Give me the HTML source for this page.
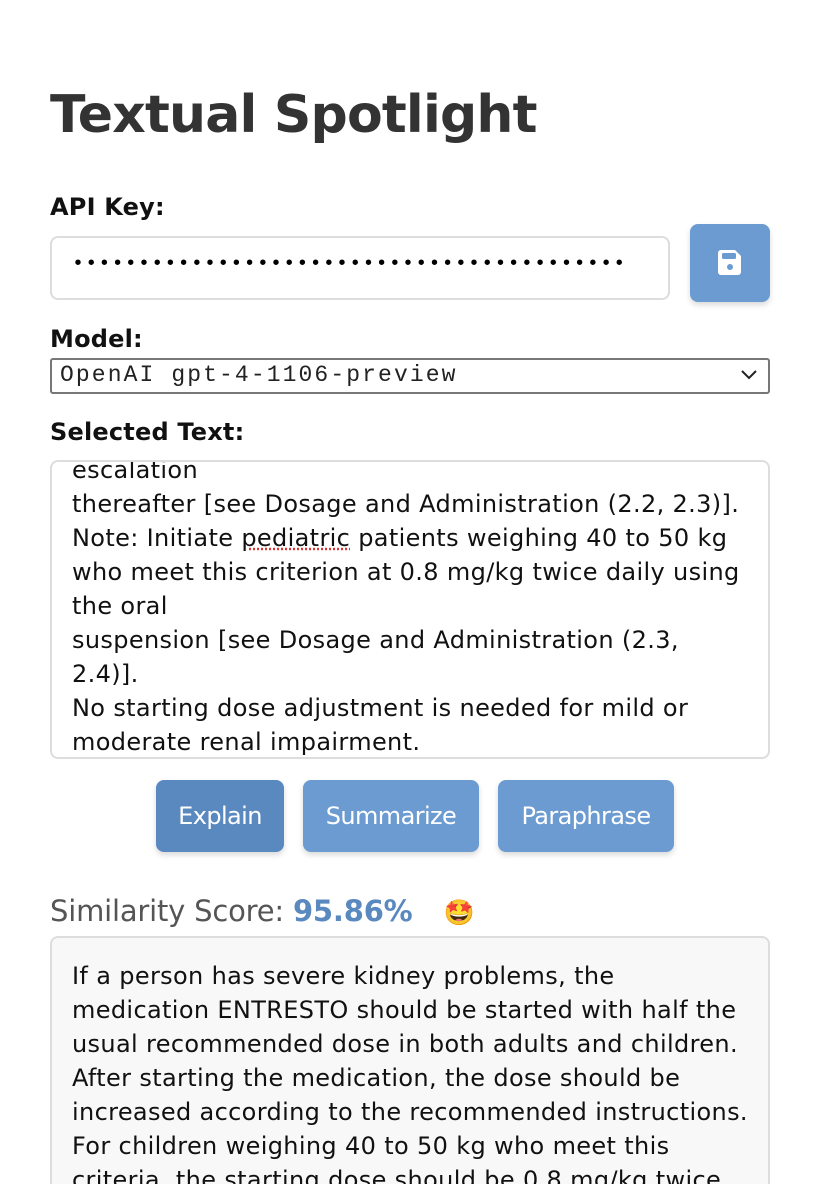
<!DOCTYPE html>
<html><head><style>
html,body{margin:0;overflow:hidden}
body{background:#fff;font-family:"DejaVu Sans",sans-serif;color:#000;width:816px;height:1184px;position:relative}
.a{position:absolute}
h1{position:absolute;left:50px;top:85px;margin:0;font-size:52px;font-weight:bold;color:#333;letter-spacing:-0.8px}
.lbl{position:absolute;left:50px;font-size:24px;font-weight:bold;color:#111;letter-spacing:0.2px}
.txt{font-size:24px;line-height:34px;color:#111;letter-spacing:0.35px}
.btn{position:absolute;top:780px;height:72px;background:#6b9bd1;color:#fff;border-radius:8px;font-size:24px;display:flex;align-items:center;justify-content:center;box-shadow:0 3px 6px rgba(0,0,0,.15);letter-spacing:-0.6px}
</style></head><body>
<h1>Textual Spotlight</h1>
<div class="lbl" style="top:193px">API Key:</div>
<div class="a" style="left:50px;top:236px;width:616px;height:60px;border:2px solid #ddd;border-radius:8px"></div>
<div class="a" style="left:72px;top:253px;font-size:20px;letter-spacing:1.2px;font-family:'Liberation Mono',monospace">••••••••••••••••••••••••••••••••••••••••••</div>
<div class="a" style="left:690px;top:224px;width:80px;height:78px;background:#6b9bd1;border-radius:8px;box-shadow:0 3px 6px rgba(0,0,0,.15)">
<svg width="80" height="78" viewBox="0 0 80 78"><path d="M28 29a3 3 0 0 1 3-3h14l6 6v16a3 3 0 0 1-3 3H31a3 3 0 0 1-3-3z" fill="#fff"/><rect x="32" y="29" width="14" height="6" rx="1.5" fill="#6b9bd1"/><circle cx="40" cy="43" r="3" fill="#6b9bd1"/></svg></div>
<div class="lbl" style="top:325px">Model:</div>
<div class="a" style="left:50px;top:358px;width:716px;height:32px;border:2px solid #777;border-radius:3px"></div>
<div class="a" style="left:60px;top:362px;font-family:'Liberation Mono',monospace;font-size:23px;letter-spacing:2.1px;color:#222">OpenAI gpt-4-1106-preview</div>
<svg class="a" style="left:740px;top:369px" width="18" height="12"><path d="M2 2l7 7 7-7" stroke="#222" stroke-width="2" fill="none"/></svg>
<div class="lbl" style="top:418px">Selected Text:</div>
<div class="a" style="left:50px;top:460px;width:716px;height:295px;border:2px solid #ddd;border-radius:8px;overflow:hidden">
<div class="txt" style="position:absolute;left:20px;top:-9px;width:690px;white-space:nowrap">escalation<br>thereafter [see Dosage and Administration (2.2, 2.3)].<br>Note: Initiate <span style="text-decoration:underline dotted #d33">pediatric</span> patients weighing 40 to 50 kg<br>who meet this criterion at 0.8 mg/kg twice daily using<br>the oral<br>suspension [see Dosage and Administration (2.3,<br>2.4)].<br>No starting dose adjustment is needed for mild or<br>moderate renal impairment.</div></div>
<div class="btn" style="left:156px;width:128px;background:#5a89bf">Explain</div>
<div class="btn" style="left:303px;width:176px">Summarize</div>
<div class="btn" style="left:498px;width:176px">Paraphrase</div>
<div class="a" style="left:50px;top:894px;font-size:29px;color:#555;letter-spacing:-0.2px">Similarity Score: <b style="color:#5a89bf">95.86%</b> <span style="font-size:25px;margin-left:22px">🤩</span></div>
<div class="a" style="left:50px;top:936px;width:716px;height:300px;border:2px solid #ddd;border-radius:8px;background:#f8f8f8">
<div class="txt" style="position:absolute;left:20px;top:21px;width:690px;white-space:nowrap">If a person has severe kidney problems, the<br>medication ENTRESTO should be started with half the<br>usual recommended dose in both adults and children.<br>After starting the medication, the dose should be<br>increased according to the recommended instructions.<br>For children weighing 40 to 50 kg who meet this<br>criteria, the starting dose should be 0.8 mg/kg twice</div></div>
</body></html>
